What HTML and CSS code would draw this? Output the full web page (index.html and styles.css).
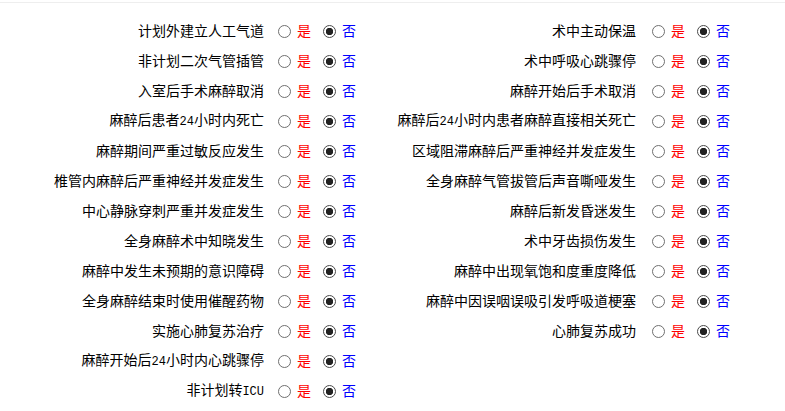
FILE: index.html
```html
<!DOCTYPE html>
<html lang="zh-CN">
<head>
    <meta charset="UTF-8">
    <title>麻醉质控指标</title>
    <link rel="stylesheet" href="styles.css">
</head>
<body>
    <div class="top-line"></div>
    <div class="board">
        <div class="col col-left">
            <div class="row"><span class="label">计划外建立人工气道</span><span class="opts"><input type="radio" name="a1"><span class="yes">是</span><input type="radio" name="a1" checked><span class="no">否</span></span></div>
            <div class="row"><span class="label">非计划二次气管插管</span><span class="opts"><input type="radio" name="a2"><span class="yes">是</span><input type="radio" name="a2" checked><span class="no">否</span></span></div>
            <div class="row"><span class="label">入室后手术麻醉取消</span><span class="opts"><input type="radio" name="a3"><span class="yes">是</span><input type="radio" name="a3" checked><span class="no">否</span></span></div>
            <div class="row"><span class="label">麻醉后患者<span class="latin">24</span>小时内死亡</span><span class="opts"><input type="radio" name="a4"><span class="yes">是</span><input type="radio" name="a4" checked><span class="no">否</span></span></div>
            <div class="row"><span class="label">麻醉期间严重过敏反应发生</span><span class="opts"><input type="radio" name="a5"><span class="yes">是</span><input type="radio" name="a5" checked><span class="no">否</span></span></div>
            <div class="row"><span class="label">椎管内麻醉后严重神经并发症发生</span><span class="opts"><input type="radio" name="a6"><span class="yes">是</span><input type="radio" name="a6" checked><span class="no">否</span></span></div>
            <div class="row"><span class="label">中心静脉穿刺严重并发症发生</span><span class="opts"><input type="radio" name="a7"><span class="yes">是</span><input type="radio" name="a7" checked><span class="no">否</span></span></div>
            <div class="row"><span class="label">全身麻醉术中知晓发生</span><span class="opts"><input type="radio" name="a8"><span class="yes">是</span><input type="radio" name="a8" checked><span class="no">否</span></span></div>
            <div class="row"><span class="label">麻醉中发生未预期的意识障碍</span><span class="opts"><input type="radio" name="a9"><span class="yes">是</span><input type="radio" name="a9" checked><span class="no">否</span></span></div>
            <div class="row"><span class="label">全身麻醉结束时使用催醒药物</span><span class="opts"><input type="radio" name="a10"><span class="yes">是</span><input type="radio" name="a10" checked><span class="no">否</span></span></div>
            <div class="row"><span class="label">实施心肺复苏治疗</span><span class="opts"><input type="radio" name="a11"><span class="yes">是</span><input type="radio" name="a11" checked><span class="no">否</span></span></div>
            <div class="row"><span class="label">麻醉开始后<span class="latin">24</span>小时内心跳骤停</span><span class="opts"><input type="radio" name="a12"><span class="yes">是</span><input type="radio" name="a12" checked><span class="no">否</span></span></div>
            <div class="row"><span class="label">非计划转<span class="latin">ICU</span></span><span class="opts"><input type="radio" name="a13"><span class="yes">是</span><input type="radio" name="a13" checked><span class="no">否</span></span></div>
        </div>
        <div class="col col-right">
            <div class="row"><span class="label">术中主动保温</span><span class="opts"><input type="radio" name="b1"><span class="yes">是</span><input type="radio" name="b1" checked><span class="no">否</span></span></div>
            <div class="row"><span class="label">术中呼吸心跳骤停</span><span class="opts"><input type="radio" name="b2"><span class="yes">是</span><input type="radio" name="b2" checked><span class="no">否</span></span></div>
            <div class="row"><span class="label">麻醉开始后手术取消</span><span class="opts"><input type="radio" name="b3"><span class="yes">是</span><input type="radio" name="b3" checked><span class="no">否</span></span></div>
            <div class="row"><span class="label">麻醉后<span class="latin">24</span>小时内患者麻醉直接相关死亡</span><span class="opts"><input type="radio" name="b4"><span class="yes">是</span><input type="radio" name="b4" checked><span class="no">否</span></span></div>
            <div class="row"><span class="label">区域阻滞麻醉后严重神经并发症发生</span><span class="opts"><input type="radio" name="b5"><span class="yes">是</span><input type="radio" name="b5" checked><span class="no">否</span></span></div>
            <div class="row"><span class="label">全身麻醉气管拔管后声音嘶哑发生</span><span class="opts"><input type="radio" name="b6"><span class="yes">是</span><input type="radio" name="b6" checked><span class="no">否</span></span></div>
            <div class="row"><span class="label">麻醉后新发昏迷发生</span><span class="opts"><input type="radio" name="b7"><span class="yes">是</span><input type="radio" name="b7" checked><span class="no">否</span></span></div>
            <div class="row"><span class="label">术中牙齿损伤发生</span><span class="opts"><input type="radio" name="b8"><span class="yes">是</span><input type="radio" name="b8" checked><span class="no">否</span></span></div>
            <div class="row"><span class="label">麻醉中出现氧饱和度重度降低</span><span class="opts"><input type="radio" name="b9"><span class="yes">是</span><input type="radio" name="b9" checked><span class="no">否</span></span></div>
            <div class="row"><span class="label">麻醉中因误咽误吸引发呼吸道梗塞</span><span class="opts"><input type="radio" name="b10"><span class="yes">是</span><input type="radio" name="b10" checked><span class="no">否</span></span></div>
            <div class="row"><span class="label">心肺复苏成功</span><span class="opts"><input type="radio" name="b11"><span class="yes">是</span><input type="radio" name="b11" checked><span class="no">否</span></span></div>
        </div>
    </div>
</body>
</html>
```

FILE: styles.css
```css
body {
    margin: 0;
    font-family: "Noto Sans CJK SC", sans-serif;
    font-size: 14px;
    color: #000;
    background-color: #fff;
}
.top-line {
    margin-top: 2px;
    height: 1px;
    background-color: #eee;
}
.board {
    display: grid;
    grid-template-columns: 374px 1fr;
    padding-top: 12px;
}
.col {
    display: flex;
    flex-direction: column;
}
.row {
    display: flex;
    align-items: center;
    height: 30px;
}
.label {
    text-align: right;
    white-space: nowrap;
    line-height: 30px;
}
.col-left .label {
    width: 264px;
    margin-right: 14px;
}
.col-right .label {
    width: 262px;
    margin-right: 16px;
}
.latin {
    font-family: "Liberation Mono", monospace;
    font-size: 12px;
}
.opts {
    display: flex;
    align-items: center;
}
input[type="radio"] {
    appearance: none;
    width: 13px;
    height: 13px;
    margin: 2px 6px 0 0;
    border: 1px solid #6f6f6f;
    border-radius: 50%;
    background-color: #fff;
    box-sizing: border-box;
}
input[type="radio"]:checked {
    border-color: #4a4a4a;
    background: radial-gradient(circle, #222 0, #222 3.4px, #fff 4px);
}
.yes {
    color: #f00;
    margin-right: 12px;
}
.no {
    color: #00f;
}
```
